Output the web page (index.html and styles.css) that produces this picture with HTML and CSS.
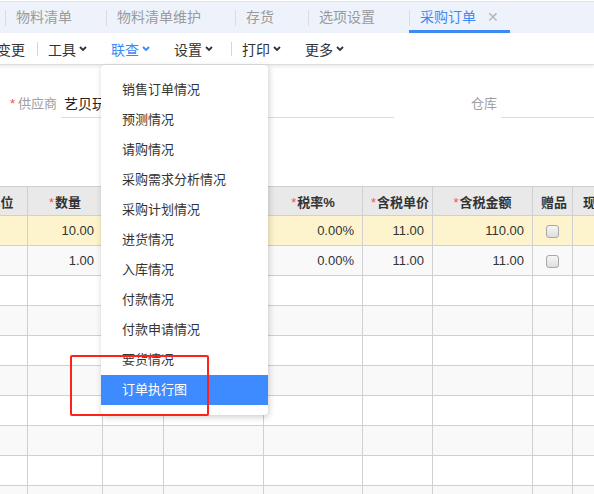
FILE: index.html
```html
<!DOCTYPE html>
<html>
  <head>
    <title>采购订单</title>
    <meta charset="utf-8" />
    <link rel="stylesheet" href="styles.css">
  </head>
  <body>
    <div class="tabbar">
      <div class="tab">物料清单</div>
      <div class="tab">物料清单维护</div>
      <div class="tab">存货</div>
      <div class="tab">选项设置</div>
      <div class="tab active">采购订单<span class="close">✕</span></div>
    </div>
    <div class="toolbar">
      <span class="tool first">变更</span>
      <span class="sep"></span>
      <span class="tool">工具<svg class="chev" viewBox="0 0 8 5"><path d="M1 1l3 3 3-3" /></svg></span>
      <span class="tool link">联查<svg class="chev" viewBox="0 0 8 5"><path d="M1 1l3 3 3-3" /></svg></span>
      <span class="tool">设置<svg class="chev" viewBox="0 0 8 5"><path d="M1 1l3 3 3-3" /></svg></span>
      <span class="sep wide"></span>
      <span class="tool">打印<svg class="chev" viewBox="0 0 8 5"><path d="M1 1l3 3 3-3" /></svg></span>
      <span class="tool">更多<svg class="chev" viewBox="0 0 8 5"><path d="M1 1l3 3 3-3" /></svg></span>
    </div>
    <div class="form">
      <div class="field supplier">
        <label><i>*</i>供应商</label>
        <div class="value">艺贝玩具</div>
      </div>
      <div class="field store">
        <label>仓库</label>
        <div class="value"></div>
      </div>
    </div>
    <table class="grid">
      <colgroup>
        <col style="width:54px"><col style="width:75px"><col style="width:61px"><col style="width:100px"><col style="width:99px"><col style="width:70px"><col style="width:100px"><col style="width:40px"><col style="width:60px">
      </colgroup>
      <thead>
        <tr>
          <th>单位</th>
          <th><i>*</i>数量</th>
          <th>单价</th>
          <th>金额</th>
          <th><i>*</i>税率%</th>
          <th><i>*</i>含税单价</th>
          <th><i>*</i>含税金额</th>
          <th>赠品</th>
          <th>现存量</th>
        </tr>
      </thead>
      <tbody>
        <tr class="current">
          <td></td><td class="num">10.00</td><td></td><td></td><td class="num">0.00%</td><td class="num">11.00</td><td class="num">110.00</td><td class="chk"><span class="box"></span></td><td></td>
        </tr>
        <tr>
          <td></td><td class="num">1.00</td><td></td><td></td><td class="num">0.00%</td><td class="num">11.00</td><td class="num">11.00</td><td class="chk"><span class="box"></span></td><td></td>
        </tr>
        <tr><td></td><td></td><td></td><td></td><td></td><td></td><td></td><td></td><td></td></tr>
        <tr><td></td><td></td><td></td><td></td><td></td><td></td><td></td><td></td><td></td></tr>
        <tr><td></td><td></td><td></td><td></td><td></td><td></td><td></td><td></td><td></td></tr>
        <tr><td></td><td></td><td></td><td></td><td></td><td></td><td></td><td></td><td></td></tr>
        <tr><td></td><td></td><td></td><td></td><td></td><td></td><td></td><td></td><td></td></tr>
        <tr><td></td><td></td><td></td><td></td><td></td><td></td><td></td><td></td><td></td></tr>
        <tr><td></td><td></td><td></td><td></td><td></td><td></td><td></td><td></td><td></td></tr>
        <tr><td></td><td></td><td></td><td></td><td></td><td></td><td></td><td></td><td></td></tr>
      </tbody>
    </table>
    <ul class="dropdown">
      <li>销售订单情况</li>
      <li>预测情况</li>
      <li>请购情况</li>
      <li>采购需求分析情况</li>
      <li>采购计划情况</li>
      <li>进货情况</li>
      <li>入库情况</li>
      <li>付款情况</li>
      <li>付款申请情况</li>
      <li>要货情况</li>
      <li class="hover">订单执行图</li>
    </ul>
    <div class="mark"></div>
  </body>
</html>
```

FILE: styles.css
```css
body {
  margin: 0;
  width: 594px;
  height: 494px;
  overflow: hidden;
  position: relative;
  font-family: "Liberation Sans", "Noto Sans CJK SC", sans-serif;
  color: #333;
  background: #fff;
}
/* tabs */
.tabbar {
  display: flex;
  height: 31px;
  margin-top: 1px;
  padding-left: 5px;
  border-top: 1px solid #e2e2e2;
  background-color: #eef3fb;
  font-size: 14px;
  line-height: 30px;
  white-space: nowrap;
}
.tab {
  position: relative;
  padding: 0 34px 0 11px;
  color: #9a9a9a;
}
.tab::before {
  content: "";
  position: absolute;
  left: 0;
  top: 8px;
  height: 16px;
  border-left: 1px solid #dcdcdc;
}
.tab.active {
  color: #3c8af5;
  padding-right: 11px;
  border-bottom: 3px solid #3c8af5;
  height: 28px;
}
.tab .close {
  margin-left: 11px;
  color: #b5b5b5;
  font-size: 14px;
}
/* toolbar */
.toolbar {
  display: flex;
  align-items: center;
  height: 31px;
  margin-left: -3px;
  font-size: 14px;
  white-space: nowrap;
  border-bottom: 1px solid #dedede;
  box-shadow: 0 2px 3px rgba(0, 0, 0, 0.08);
}
.tool {
  display: flex;
  align-items: center;
  margin-right: 24px;
}
.tool.first {
  margin-right: 12px;
}
.tool.link {
  color: #3c8af5;
}
.chev {
  width: 8px;
  height: 5px;
  margin-left: 3px;
  fill: none;
  stroke: currentColor;
  stroke-width: 1.8;
}
.sep {
  width: 1px;
  height: 14px;
  margin-right: 10px;
  background: #d6d6d6;
}
.sep.wide {
  margin-left: -6px;
}
/* header form */
.form {
  display: flex;
  height: 121px;
  font-size: 13px;
}
.field {
  display: flex;
  align-items: flex-end;
  height: 53px;
}
.field label {
  color: #a0a0a0;
  padding-bottom: 6px;
}
.field label i {
  color: #ff4d4f;
  font-style: normal;
  margin-right: 3px;
}
.field .value {
  height: 24px;
  line-height: 22px;
  border-bottom: 1px solid #dcdcdc;
  color: #222;
  font-size: 14px;
  overflow: hidden;
  white-space: nowrap;
}
.supplier {
  margin-left: 10px;
}
.supplier label {
  width: 51px;
}
.supplier .value {
  width: 330px;
  padding-left: 3px;
}
.store {
  margin-left: 77px;
}
.store label {
  width: 30px;
}
.store .value {
  width: 100px;
}
/* grid */
.grid {
  margin-left: -27px;
  border-collapse: collapse;
  table-layout: fixed;
  width: 659px;
  font-size: 13px;
}
.grid th,
.grid td {
  height: 29px;
  padding: 0 8px;
  border: 1px solid #d0d0d0;
  white-space: nowrap;
  overflow: hidden;
}
.grid th {
  height: 28px;
  background: #e9e9e9;
  font-weight: bold;
  text-align: center;
  color: #333;
}
.grid th i {
  color: #ff4d4f;
  font-style: normal;
  font-weight: normal;
  margin-right: 1px;
}
.grid tbody tr:nth-child(even) {
  background: #f9f9f9;
}
.grid tbody tr.current {
  background: #fdf4cd;
}
.grid td.num {
  text-align: right;
}
.grid td.chk {
  text-align: center;
  padding: 0;
}
.box {
  display: inline-block;
  width: 11px;
  height: 11px;
  vertical-align: middle;
  border: 1px solid #a8a8a8;
  border-radius: 3px;
  background: linear-gradient(#f6f6f6, #dedede);
}
/* linked query menu */
.dropdown {
  position: absolute;
  left: 101px;
  top: 65px;
  width: 167px;
  margin: 0;
  padding: 10px 0;
  list-style: none;
  background: #fff;
  border-radius: 4px;
  box-shadow: 1px 2px 6px rgba(0, 0, 0, 0.2);
  font-size: 13px;
}
.dropdown li {
  height: 30px;
  line-height: 30px;
  padding-left: 21px;
  color: #333;
}
.dropdown li.hover {
  background: #3d8bff;
  color: #fff;
}
.mark {
  position: absolute;
  left: 70px;
  top: 355px;
  width: 135px;
  height: 57px;
  border: 2px solid #ff2218;
  border-radius: 2px;
}
```
